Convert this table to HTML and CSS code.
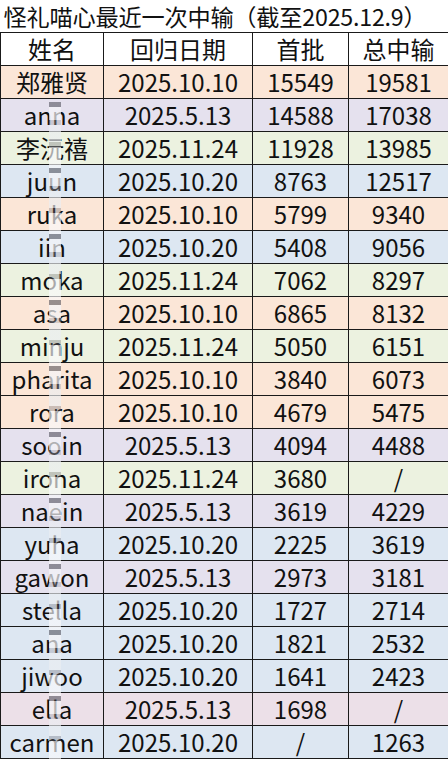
FILE: index.html
```html
<!DOCTYPE html>
<html lang="zh">
<head>
<meta charset="utf-8">
<title>怪礼喵心最近一次中输</title>
<link rel="stylesheet" href="styles.css">
</head>
<body>
<div class="sheet">
<table class="grid">
<colgroup><col class="c1"><col class="c2"><col class="c3"><col class="c4"></colgroup>
<thead>
<tr class="title"><th colspan="4">怪礼喵心最近一次中输（截至2025.12.9）</th></tr>
<tr class="head"><th>姓名</th><th>回归日期</th><th>首批</th><th>总中输</th></tr>
</thead>
<tbody>
<tr class="peach"><td>郑雅贤</td><td>2025.10.10</td><td>15549</td><td>19581</td></tr>
<tr class="lav"><td>anna</td><td>2025.5.13</td><td>14588</td><td>17038</td></tr>
<tr class="green"><td>李沅禧</td><td>2025.11.24</td><td>11928</td><td>13985</td></tr>
<tr class="blue"><td>juun</td><td>2025.10.20</td><td>8763</td><td>12517</td></tr>
<tr class="peach"><td>ruka</td><td>2025.10.10</td><td>5799</td><td>9340</td></tr>
<tr class="blue"><td>iin</td><td>2025.10.20</td><td>5408</td><td>9056</td></tr>
<tr class="green"><td>moka</td><td>2025.11.24</td><td>7062</td><td>8297</td></tr>
<tr class="peach"><td>asa</td><td>2025.10.10</td><td>6865</td><td>8132</td></tr>
<tr class="green"><td>minju</td><td>2025.11.24</td><td>5050</td><td>6151</td></tr>
<tr class="peach"><td>pharita</td><td>2025.10.10</td><td>3840</td><td>6073</td></tr>
<tr class="peach"><td>rora</td><td>2025.10.10</td><td>4679</td><td>5475</td></tr>
<tr class="lav"><td>sooin</td><td>2025.5.13</td><td>4094</td><td>4488</td></tr>
<tr class="green"><td>irona</td><td>2025.11.24</td><td>3680</td><td>/</td></tr>
<tr class="lav"><td>naein</td><td>2025.5.13</td><td>3619</td><td>4229</td></tr>
<tr class="blue"><td>yuha</td><td>2025.10.20</td><td>2225</td><td>3619</td></tr>
<tr class="lav"><td>gawon</td><td>2025.5.13</td><td>2973</td><td>3181</td></tr>
<tr class="blue"><td>stella</td><td>2025.10.20</td><td>1727</td><td>2714</td></tr>
<tr class="blue"><td>ana</td><td>2025.10.20</td><td>1821</td><td>2532</td></tr>
<tr class="blue"><td>jiwoo</td><td>2025.10.20</td><td>1641</td><td>2423</td></tr>
<tr class="pink"><td>ella</td><td>2025.5.13</td><td>1698</td><td>/</td></tr>
<tr class="blue"><td>carmen</td><td>2025.10.20</td><td>/</td><td>1263</td></tr>
</tbody>
</table>
<div class="mosaic" aria-hidden="true"></div>
</div>
</body>
</html>
```
FILE: styles.css
```css
html, body {
  margin: 0;
  padding: 0;
  background: #ffffff;
}
.sheet {
  position: relative;
  width: 448px;
  height: 760px;
  overflow: hidden;
  font-family: "Noto Sans CJK SC", "Noto Sans", sans-serif;
  color: #111111;
}
.grid {
  width: 448px;
  border-collapse: collapse;
  table-layout: fixed;
}
.c1 { width: 103px; }
.c2 { width: 149px; }
.c3 { width: 96px; }
.c4 { width: 100px; }
.grid th, .grid td {
  height: 32px;
  padding: 0;
  font-size: 24px;
  font-weight: 400;
  line-height: 32px;
  text-align: center;
  white-space: nowrap;
  border: 1px solid #1a1a1a;
}
.grid tr.title th {
  text-align: left;
  padding-left: 3px;
  font-size: 23.2px;
  letter-spacing: -0.2px;
  border-top: none;
  border-left: none;
  border-right: none;
  color: #111;
}
.grid tr.head th { background: #ffffff; }
.peach td { background: #fbe6d7; }
.lav td { background: #e5e1ee; }
.green td { background: #ecf2e0; }
.blue td { background: #dde7f2; }
.pink td { background: #ece0e8; }
.mosaic {
  position: absolute;
  left: 49px;
  top: 102px;
  width: 12px;
  height: 658px;
  background:
    repeating-linear-gradient(180deg,
      rgba(70,70,80,0.55) 0 5px,
      rgba(245,245,248,0.7) 5px 18px,
      rgba(160,160,170,0.4) 18px 23px,
      rgba(235,238,242,0.65) 23px 40px,
      rgba(110,110,120,0.35) 40px 45px,
      rgba(250,250,252,0.65) 45px 66px);
}
```
